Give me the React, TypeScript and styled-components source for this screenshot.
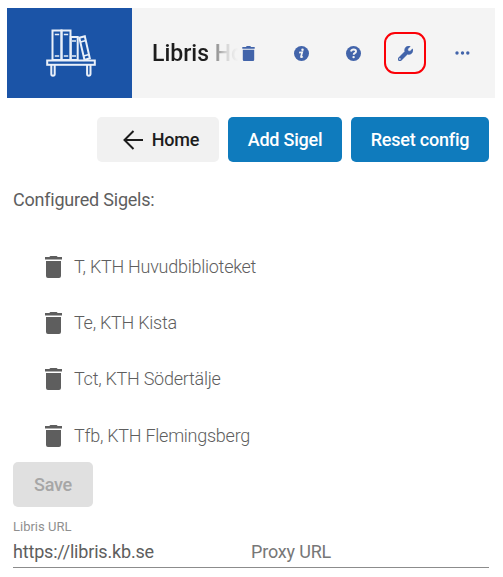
import React from 'react';
import styled, { createGlobalStyle } from 'styled-components';

const GlobalStyle = createGlobalStyle`
  * { box-sizing: border-box; }
  body {
    margin: 0;
    background: #fff;
    color: #5e5e5e;
    font: 400 18px/24px Roboto, sans-serif;
    letter-spacing: -0.22px;
  }
`;

const Page = styled.div`
  width: 503px;
  height: 577px;
  padding: 8px 8px 0 7px;
  overflow: hidden;
`;

const Header = styled.header`
  display: flex;
  height: 90px;
  background: #f4f4f4;
`;

const Logo = styled.div`
  display: flex;
  flex: none;
  width: 125px;
  padding: 20px 0 0 37px;
  background: #1b54a7;
`;

const Title = styled.h1`
  flex: none;
  width: 89px;
  margin: 0 0 0 20px;
  overflow: hidden;
  white-space: nowrap;
  color: #1d1d1d;
  font-size: 23px;
  font-weight: 500;
  letter-spacing: 0;
  line-height: 91px;
  mask-image: linear-gradient(to right, #000 54px, rgb(0 0 0 / 0.5) 63px, rgb(0 0 0 / 0.15) 74px, transparent 86px);
`;

const Tools = styled.nav`
  display: flex;
  align-items: center;
  height: 90px;
`;

const Tool = styled.button<{ $width: number; $marked?: boolean }>`
  display: flex;
  align-items: center;
  justify-content: center;
  width: ${(p) => p.$width}px;
  height: 42px;
  margin: 0;
  padding: ${(p) => (p.$marked ? '0 0 0 1px' : '0')};
  border: ${(p) => (p.$marked ? '2px solid #fb0007' : '0')};
  border-radius: 11px;
  background: none;
  color: #4264aa;
`;

const ToolGap = styled.span<{ $width: number }>`
  width: ${(p) => p.$width}px;
`;

const Content = styled.main`
  padding: 19px 6px 0;
`;

const Actions = styled.div`
  display: flex;
  justify-content: flex-end;
  gap: 9px;
`;

const Button = styled.button<{ $kind: 'plain' | 'primary' | 'disabled'; $width: number }>`
  display: flex;
  align-items: center;
  justify-content: center;
  gap: 8px;
  width: ${(p) => p.$width}px;
  height: 45px;
  padding: ${(p) => (p.$kind === 'plain' ? '0 0 0 5px' : '0')};
  border: 0;
  border-radius: 5px;
  background: ${(p) => ({ plain: '#f1f1f1', primary: '#0f7bbd', disabled: '#e0e0e0' })[p.$kind]};
  color: ${(p) => ({ plain: '#1d1d1d', primary: '#fff', disabled: '#a6a6a6' })[p.$kind]};
  font: 500 18px/24px Roboto, sans-serif;
  letter-spacing: -0.22px;
`;

const Heading = styled.p`
  margin: 26px 0 0;
`;

const SigelList = styled.ul`
  height: 223px;
  margin: 27px 0 0;
  padding: 0;
  list-style: none;
`;

const Sigel = styled.li`
  display: flex;
  align-items: center;
  height: 56px;
  padding-left: 32px;
  gap: 12px;
  font-weight: 300;
  letter-spacing: -0.26px;

  &:last-child {
    height: 58px;
  }
`;

const Fields = styled.div`
  display: flex;
  height: 61px;
  border-bottom: 1px solid #8c8c8c;
`;

const Field = styled.label<{ $width: number }>`
  display: flex;
  flex-direction: column;
  width: ${(p) => p.$width}px;
  padding-top: 11px;
`;

const FieldLabel = styled.span`
  height: 22px;
  color: #8f8f8f;
  font-size: 13px;
  letter-spacing: 0;
  line-height: 18px;
`;

const FieldValue = styled.span<{ $placeholder?: boolean }>`
  color: ${(p) => (p.$placeholder ? '#777' : '#5e5e5e')};
  letter-spacing: -0.18px;
`;

const BookshelfIcon = () => (
  <svg width="54" height="50" viewBox="0 0 54 50" fill="none" stroke="#eaf0f9" strokeWidth="2">
    <rect x="8.5" y="2.5" width="9" height="29.5" />
    <rect x="17.5" y="2.5" width="9" height="29.5" />
    <rect x="26.7" y="9" width="7" height="23" />
    <path d="M35.3 9.8 40.8 8.3 45.8 30.3 40.5 32Z" />
    <path d="M36.5 14 42 12.5M39.6 28 45 26.5M10.8 6.5h4.4M19.8 6.5h4.4M10.8 28h4.4M19.8 28h4.4M28 13h4M28 28h4" strokeWidth="1.5" />
    <rect x="3.2" y="32.5" width="47.6" height="4.3" />
    <path d="M7.3 37v9a1.7 1.7 0 0 0 3.4 0V37M43.1 37v9a1.7 1.7 0 0 0 3.4 0V37" />
  </svg>
);

const TrashIcon = ({ width, height }: { width: number; height: number }) => (
  <svg width={width} height={height} viewBox="0 0 17 22" preserveAspectRatio="none" fill="currentColor">
    <path d="M0 1h4.2L5.4 0h6.2l1.2 1H17v2.6H0ZM1 5h15v15q0 2-2 2H3q-2 0-2-2Z" />
  </svg>
);

const SmallTrashIcon = () => (
  <svg width="13" height="15" viewBox="0 0 13 15" fill="currentColor">
    <path d="M.3 1H4L4.7 0h3.6L9 1h3.7v1.8H.3ZM.8 3.7h11.4v10.1q0 1.2-1.2 1.2H2q-1.2 0-1.2-1.2Z" />
  </svg>
);

const InfoIcon = () => (
  <svg width="15" height="15" viewBox="0 0 15 15">
    <circle cx="7.5" cy="7.5" r="7.5" fill="currentColor" />
    <circle cx="8.5" cy="3.8" r="1.25" fill="#f4f4f4" />
    <path d="M5.1 6.6 8.2 6.2 7 10.7q-.1 1 1.8-.2" fill="none" stroke="#f4f4f4" strokeWidth="1.7" />
  </svg>
);

const HelpIcon = () => (
  <svg width="15" height="15" viewBox="0 0 15 15">
    <circle cx="7.5" cy="7.5" r="7.5" fill="currentColor" />
    <path d="M5 5.5q.4-2 2.6-2 2.4 0 2.4 1.9 0 1-1.3 1.7-1 .6-1 1.7" fill="none" stroke="#f4f4f4" strokeWidth="1.9" />
    <circle cx="7.6" cy="11.1" r="1.2" fill="#f4f4f4" />
  </svg>
);

const WrenchIcon = () => (
  <svg width="15" height="15" viewBox="0 0 512 512" fill="currentColor" fillRule="evenodd">
    <path d="M507.7 109.1c-2.2-9-13.5-12.1-20.1-5.5l-74.4 74.4-67.9-11.3-11.3-67.9 74.4-74.4c6.6-6.6 3.4-17.9-5.7-20.2-47.4-11.7-99.6.9-136.6 37.9-39.6 39.7-50.6 97.1-34.1 147.2L18.7 402.8c-25 25-25 65.5 0 90.5s65.5 25 90.5 0l213.2-213.2c50.1 16.7 107.5 5.7 147.4-34.2 37.1-37.1 49.7-89.3 37.9-136.8ZM64 476c-20 0-34-15-34-34s14-34 34-34 34 15 34 34-14 34-34 34Z" stroke="currentColor" strokeWidth="16" />
  </svg>
);

const MoreIcon = () => (
  <svg width="15" height="4" viewBox="0 0 15 4" fill="currentColor">
    <circle cx="2" cy="2" r="1.7" />
    <circle cx="7.5" cy="2" r="1.7" />
    <circle cx="12.8" cy="2" r="1.7" />
  </svg>
);

const BackIcon = () => (
  <svg width="22" height="20" viewBox="0 0 22 20" fill="none" stroke="currentColor" strokeWidth="2">
    <path d="M11.5 1 2.5 10l9 9M2.5 10H21" />
  </svg>
);

const sigels = ['T, KTH Huvudbiblioteket', 'Te, KTH Kista', 'Tct, KTH Södertälje', 'Tfb, KTH Flemingsberg'];

export default function App() {
  return (
    <Page>
      <GlobalStyle />
      <Header>
        <Logo><BookshelfIcon /></Logo>
        <Title>Libris Home</Title>
        <Tools>
          <Tool $width={14} aria-label="Delete"><SmallTrashIcon /></Tool>
          <ToolGap $width={38.5} />
          <Tool $width={15} aria-label="Information"><InfoIcon /></Tool>
          <ToolGap $width={37} />
          <Tool $width={15} aria-label="Help"><HelpIcon /></Tool>
          <ToolGap $width={23.5} />
          <Tool $width={42} $marked aria-label="Configuration"><WrenchIcon /></Tool>
          <ToolGap $width={28.5} />
          <Tool $width={15} aria-label="More"><MoreIcon /></Tool>
        </Tools>
      </Header>
      <Content>
        <Actions>
          <Button $kind="plain" $width={122}><BackIcon />Home</Button>
          <Button $kind="primary" $width={114}>Add Sigel</Button>
          <Button $kind="primary" $width={138}>Reset config</Button>
        </Actions>
        <Heading>Configured Sigels:</Heading>
        <SigelList>
          {sigels.map((name) => (
            <Sigel key={name}><TrashIcon width={17} height={22} />{name}</Sigel>
          ))}
        </SigelList>
        <Button $kind="disabled" $width={80}>Save</Button>
        <Fields>
          <Field $width={238}>
            <FieldLabel>Libris URL</FieldLabel>
            <FieldValue>https://libris.kb.se</FieldValue>
          </Field>
          <Field $width={238}>
            <FieldLabel />
            <FieldValue $placeholder>Proxy URL</FieldValue>
          </Field>
        </Fields>
      </Content>
    </Page>
  );
}
